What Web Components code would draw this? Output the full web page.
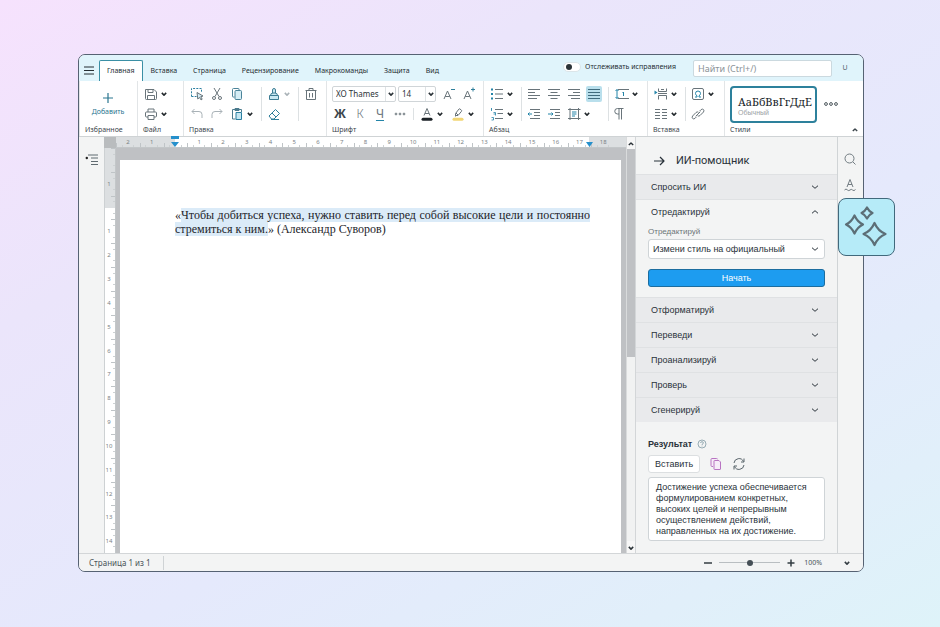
<!DOCTYPE html>
<html lang="ru">
<head>
<meta charset="utf-8">
<title>Текстовый редактор</title>
<style>
html,body{height:100%}
body{margin:0;box-sizing:border-box;padding:54px 76px 55px 78px;font:7px/10px "Noto Sans",sans-serif;color:#2b3338;
background:linear-gradient(150deg,#f6e2fd 0%,#ebe5fb 28%,#e5e9fc 60%,#e1effa 85%,#def3f9 100%)}
</style>
</head>
<body>
<editor-window></editor-window>
<script>
const ICONS={
menu:'<path d="M2 3h10M2 6.500h10M2 10h10" stroke-width="1.200"/>',
caret:'<path d="M4.800 5.900 7 8.100l2.200-2.200" stroke-width="1.500"/>',
caretup:'<path d="M4.800 8.100 7 5.900l2.200 2.200" stroke-width="1.400"/>',
chevron:'<path d="M4 5.700 7 8.300l3-2.600" stroke-width="1"/>',
chevronup:'<path d="M4 8.300 7 5.700l3 2.600" stroke-width="1"/>',
plus:'<path d="M7 2v10M2 7h10" stroke-width="1.200"/>',
save:'<path d="M1.500 2.500h8.500l2.500 2.500v6.500q0 1-1 1h-9q-1 0-1-1zM4 2.500v3h5v-3M3.500 12.500v-4h7v4"/>',
print:'<path d="M4 5V2h6v3M4 10H2.500q-1 0-1-1V6q0-1 1-1h9q1 0 1 1v3q0 1-1 1H10M4 8.500h6v4H4z"/>',
select:'<path d="M1.500 9.500v-8h10v4M1.500 9.500h5" stroke="#2b7fa0" stroke-dasharray="2 1.200"/><path d="M7 5.500l6 3.500-2.300.700 1.500 2.500-1.200.700-1.500-2.500-1.700 1.600z" fill="#d8eef6"/>',
cut:'<path d="M4 1l5 8.500M10 1 5 9.500"/><circle cx="4" cy="11" r="1.500"/><circle cx="10" cy="11" r="1.500"/>',
copy:'<g stroke="#4b8399"><path d="M4.500 10H3q-.500 0-.500-.500V2.500q0-1 1-1h5q.500 0 .500.500v1"/><rect x="5" y="3.500" width="6.500" height="9" rx="1" fill="#d5edf5"/></g>',
undo:'<path d="M4.500 2 2 4.500 4.500 7M2 4.500h7a3 3 0 0 1 3 3V11"/>',
redo:'<path d="M9.500 2 12 4.500 9.500 7M12 4.500H5a3 3 0 0 0-3 3V11"/>',
paste:'<path d="M5.500 12H2.500V2.500h9V5M5 1.500h4v2H5z" stroke="#4b7a8d"/><rect x="6" y="5.500" width="5.500" height="7" fill="#c4e6f2" stroke="#2b7fa0"/>',
brush:'<path d="M5.500 6V3q0-1.500 1.500-1.500T8.500 3v3M3.500 8.500Q3.500 6 6 6h2q2.500 0 2.500 2.500M2.500 8.500h9v4h-9z" stroke="#3d7c93" fill="#c9e8f2"/>',
eraser:'<path d="M2 9 8.500 2.500l4 4L7 12H4.500zM5 6l4 4M4 12.500h8" stroke="#2f7f9b"/>',
trash:'<path d="M1.500 3.500h11M5 3.500v-2h4v2M2.500 3.500v9h9v-9M5.500 6v4.500M8.500 6v4.500"/>',
fontdown:'<path d="M2 12 5.500 4 9 12M3.200 9.500h4.600"/><path d="M9 2.500h4" stroke="#2f7f9b"/>',
fontup:'<path d="M2 12 5.500 4 9 12M3.200 9.500h4.600"/><path d="M9 2.500h4M11 .500v4" stroke="#2f7f9b"/>',
more:'<g stroke="#69747a"><circle cx="3" cy="7" r=".900"/><circle cx="7" cy="7" r=".900"/><circle cx="11" cy="7" r=".900"/></g>',
dots:'<g stroke="#4c565c"><circle cx="2" cy="7" r="1.400"/><circle cx="7" cy="7" r="1.400"/><circle cx="12" cy="7" r="1.400"/></g>',
color:'<path d="M4 8.500 7 1.500l3 7M5 6.500h4"/><path d="M3 12.300h8" stroke="#1c2227" stroke-width="3" stroke-linecap="round"/>',
marker:'<path d="M4.500 9.500V6.500L8 2q.500-.500 1 0l1.500 1.300q.500.500 0 1L7 8.500H4.500M5 6l2 2"/><path d="M3 12.300h8" stroke="#f2d675" stroke-width="3" stroke-linecap="round"/>',
bullets:'<path d="M1 2.500h2M1 7h2M1 11.500h2" stroke="#2384a8" stroke-width="1.800"/><path d="M5 2.500h8M5 7h8M5 11.500h8"/>',
numbers:'<path d="M1.500 1v3M1 2h1M3.500 5.500h2v3M3.500 7h2M1.500 10.500h2v2.500h-2" stroke="#2384a8" stroke-width=".8"/><path d="M5 2.500h8M7.500 6.500h5.500M5 11.500h8"/>',
left:'<path d="M1 2.500h12M1 5.500h7M1 8.500h12M1 11.500h9"/>',
center:'<path d="M1 2.500h12M3.500 5.500h7M1 8.500h12M3.500 11.500h7"/>',
right:'<path d="M1 2.500h12M6 5.500h7M1 8.500h12M4 11.500h9"/>',
justify:'<path d="M1 2.500h12M1 5.500h12M1 8.500h12M1 11.500h12"/>',
outdent:'<path d="M3 2.500h10M7 5.500h6M7 8.500h6M3 11.500h10"/><path d="M5 7H1M2.500 5.500 1 7l1.500 1.500" stroke="#2384a8"/>',
indent:'<path d="M3 2.500h10M8 5.500h5M8 8.500h5M3 11.500h10"/><path d="M1 7h5M4.500 5.500 6 7 4.500 8.500" stroke="#2384a8"/>',
frame:'<path d="M3 1v12M11.500 1v12M1 2.500h12.500M1 11.500h12.500"/><path d="M5 5h4.500M5 7h4.500M5 9h3" stroke="#2384a8"/>',
spacing:'<path d="M2 2.500v9M.500 4 2 2.500 3.500 4M.500 10 2 11.500 3.500 10" stroke="#2384a8"/><path d="M3 2.500h11M3 11.500h11"/><path d="M8.500 5v4M7.500 6l1-1" stroke="#2384a8"/>',
para:'<path d="M7 12.500v-11M9.500 12.500v-11M11.500 1.500h-6a2.700 2.700 0 0 0 0 5.500H7"/>',
pagebreak:'<path d="M.500 3.500l3 2-3 2z" fill="#2384a8" stroke="none"/><path d="M4.500 1.500v3h8v-3M4.500 12.500v-4h8v4M7 2.500h3M4 6.500h9"/>',
columns:'<path d="M1 2.500h5M1 5.500h5M1 8.500h5M1 11.500h5M8 2.500h5M8 5.500h5M8 8.500h5M8 11.500h5"/>',
omega:'<rect x="1.500" y="1.500" width="11" height="11" rx="1.500"/><path d="M4 10h2V8.800Q4.500 8 4.500 6.500a2.500 2.500 0 0 1 5 0Q9.500 8 8 8.800V10h2" stroke="#2384a8"/>',
link:'<path d="M8.500 4.200l1.600-1.600q1.500-1 2.400 0t0 2.400L9 8.500q-1.200 1.200-2.400.200M5.500 9.800 4 11.400q-1.500 1-2.400 0t0-2.400L5 5.500q1.200-1.200 2.400-.200M4.700 9.300l4.600-4.600"/>',
outline:'<path d="M3 2h10M6 5h7M6 8.500h7M6 11.500h7"/><circle cx="1.800" cy="5" r="1.200" fill="#222" stroke="none"/>',
arrow:'<path d="M2 7h10M8 3l4 4-4 4" stroke-width="1.200"/>',
search:'<circle cx="6.500" cy="6.500" r="4.500"/><path d="M10 10l2.500 2.500"/>',
style:'<path d="M4 9 7 1.500 10 9M5 6.500h4M1.500 12q1.500-2 3 0 1.300 1.300 2.500 0 1.300-1.300 2.500 0 1.500 1.500 3-.500"/>',
help:'<circle cx="7" cy="7" r="4" stroke-width=".800"/><path d="M5.600 6q0-1.300 1.400-1.300T8.400 6Q8.400 6.700 7 7.500v.500M7 8.700v.700" stroke-width=".800"/>',
duplicate:'<path d="M4 9.500H3q-1 0-1-1V2.500q0-1 1-1h4.500q1 0 1 .800M5 4q0-.500.500-.500h4.500l1.500 1.500v7q0 .500-.500.500H5.500Q5 12.500 5 12z" stroke="#b874c2" fill="#f6ecf8"/>',
refresh:'<path d="M2 6a5 5 0 0 1 9.500-1.500M12 1.500v3.500H9M12 8a5 5 0 0 1-9.500 1.500M2 12.500V9h3"/>',
minus:'<path d="M3 7h8" stroke-width="1.500"/>',
add:'<path d="M7 3.500v7M3.500 7h7" stroke-width="1.500"/>'
};
class Base extends HTMLElement{
  connectedCallback(){
    if(this.shadowRoot)return;
    this.attachShadow({mode:'open'}).innerHTML='<style>*{box-sizing:border-box}:host{box-sizing:border-box}button,input,select,textarea{font:inherit;color:inherit;margin:0}button{cursor:pointer}'+this.css()+'</style>'+this.html();
  }
  css(){return ''}
  html(){return '<slot></slot>'}
  at(n,d=''){return this.getAttribute(n)??d}
}
const def=(name,css,html)=>customElements.define(name,class extends Base{
  css(){return css} html(){return typeof html==='function'?html(this):(html??'<slot></slot>')}});

def('ui-icon',':host{display:block;width:14px;height:14px;flex:none}svg{display:block;overflow:visible}',
 e=>`<svg width="14" height="14" viewBox="0 0 14 14" fill="none" stroke="currentColor" stroke-linejoin="round" aria-hidden="true">${ICONS[e.at('name')]}</svg>`);

def('tool-button',`:host{display:flex;align-items:center;color:#69747a}
button{display:grid;place-items:center;height:18px;width:var(--tool-width,20px);padding:0;border:0;background:none;font-size:12px;line-height:16px}
.caret{width:6px;color:#22282c}.caret ui-icon{margin:0 -4px}
:host([pressed]) button{width:16px;height:16px;margin:0 2px;background:#b9dfec;border-radius:2px;color:#3f6b7d}
:host([muted]){color:#a9b2b7}:host([softcaret]) .caret{color:#a9b2b7}`,
 e=>`<button aria-label="${e.at('label')}">${e.at('icon')?`<ui-icon name="${e.at('icon')}"></ui-icon>`:'<slot></slot>'}</button>`+(e.hasAttribute('menu')?`<button class="caret" aria-label="${e.at('label')}: варианты"><ui-icon name="caret"></ui-icon></button>`:''));

def('ribbon-group',`:host{display:flex;flex-direction:column;padding:3px var(--end,4px) 0 3px;border-left:1px solid #e2e5e7}
:host(:first-child){border-left-color:transparent}
.tools{display:flex;height:40px}.foot{display:flex;justify-content:space-between;align-items:center;height:12px;padding-left:2px}`,
 e=>`<div class="tools"><slot></slot></div><div class="foot"><span>${e.at('label')}</span><slot name="corner"></slot></div>`);
def('tool-cluster',`:host{display:grid;grid-template-rows:20px 20px;justify-items:start}
:host([split]){margin-left:8px;padding-left:3px;background:linear-gradient(#dde1e3,#dde1e3) 0 3px/1px 34px no-repeat}`);
def('tool-row',`:host{display:flex;align-items:center;height:20px}`);
def('tool-divider',`:host{display:block;width:1px;height:12px;background:#dde1e3;margin:0 3px}`);

def('combo-box',`:host{display:grid;grid-template-columns:1fr 10px;height:16px;border:1px solid #d0d5d8;border-radius:2px;background:#fff;font-size:8px;color:#2b3338}
select{grid-area:1/1/2/3;width:100%;appearance:none;border:0;background:none;padding:0 0 0 3px;height:14px;line-height:14px}
span{grid-area:1/2;display:grid;place-items:center;border-left:1px solid #dfe3e5;pointer-events:none}ui-icon{margin:0 -3px}`,
 e=>`<select aria-label="${e.at('label')}"><option>${e.at('value')}</option></select><span><ui-icon name="caret"></ui-icon></span>`);

def('menu-tabs',`:host{display:flex;align-items:stretch;height:26px;padding-top:5px;background:#e0f4fb;color:#252d32}
.menu{width:20px;border:0;background:none;padding:0;display:grid;place-items:center}
nav{display:flex}
a{padding:0 7px;border:1px solid transparent;border-bottom:0;line-height:19px;color:inherit;text-decoration:none;border-radius:2px 2px 0 0}
a[aria-current]{background:#fff;border-color:#3a8fa5}
.space{flex:1}
label{display:flex;align-items:center;gap:4px;height:14px}
.switch{appearance:none;width:18px;height:10px;border-radius:5px;background:#fff;border:1px solid #dbe5e9;padding:1px}
.switch::before{content:"";display:block;width:6px;height:6px;margin-left:1px;border-radius:3px;background:#2b3338}
.find{width:139px;height:17px;margin-left:17px;border:1px solid #cbd9df;border-radius:2px;background:#fff;padding:0 4px;font-size:9px}
.find::placeholder{color:#8b9398}
.user{border:0;background:none;width:10px;height:16px;padding:0;margin:0 13px 0 8px;color:#55626a}`,
`<button class="menu" aria-label="Меню"><ui-icon name="menu"></ui-icon></button>
<nav><a href="#" aria-current="page">Главная</a><a href="#">Вставка</a><a href="#">Страница</a><a href="#">Рецензирование</a><a href="#">Макрокоманды</a><a href="#">Защита</a><a href="#">Вид</a></nav>
<span class="space"></span>
<label><input class="switch" type="checkbox" role="switch">Отслеживать исправления</label>
<input class="find" type="text" placeholder="Найти (Ctrl+/)" aria-label="Найти"><button class="user">U</button>`);

def('add-favorite',`:host{display:flex;flex:1}button{flex:1;border:0;background:none;padding:7px 0 0;display:flex;flex-direction:column;align-items:center;gap:2px;color:#2a7690}`,
 `<button><ui-icon name="plus"></ui-icon><span>Добавить</span></button>`);
def('style-card',`:host{display:block;margin:2px 7px 0 2px}
button{display:block;width:87px;height:37px;border:2px solid #2d819c;border-radius:4px;background:#fff;padding:3px 1px 0 6px;text-align:left}
b{display:block;font:11px/14px "Noto Serif",serif;white-space:nowrap;color:#20262a}
span{display:block;font:7px/8px "Liberation Sans",sans-serif;color:#9aa1a5}`,
 `<button><b>АаБбВвГгДдЕ</b><span>Обычный</span></button>`);

def('ribbon-bar',`:host{display:flex;height:56px;background:#fff;border-bottom:1px solid #cfd3d5;color:#3c464c}
.fav{width:58px}.file{--end:16px}.edit{--end:5px}.par{--end:9px}.ins{--end:10px}.styles{flex:1;--end:1px}.narrow{--tool-width:11px}.push{margin-left:2px}.wide{width:64px}.size{width:38px;margin:0 3px 0 2px}.line{margin-left:4px;padding-left:4px}.gap{margin-left:5px}.all{--tool-width:14px}
b{font-size:12px;color:#3c464c}u{text-decoration-color:#2384a8;text-underline-offset:2px}i{font-style:normal;font-weight:300}`,
`<ribbon-group class="fav" label="Избранное"><add-favorite></add-favorite></ribbon-group>
<ribbon-group class="file" label="Файл"><tool-cluster><tool-row><tool-button icon="save" label="Сохранить" menu></tool-button></tool-row><tool-row><tool-button icon="print" label="Печать" menu></tool-button></tool-row></tool-cluster></ribbon-group>
<ribbon-group class="edit" label="Правка">
<tool-cluster><tool-row><tool-button icon="select" label="Выделить"></tool-button><tool-button icon="cut" label="Вырезать"></tool-button><tool-button icon="copy" label="Копировать"></tool-button></tool-row>
<tool-row><tool-button muted icon="undo" label="Отменить"></tool-button><tool-button muted icon="redo" label="Повторить"></tool-button><tool-button icon="paste" label="Вставить" menu></tool-button></tool-row></tool-cluster>
<tool-cluster split><tool-row><tool-button softcaret icon="brush" label="Формат по образцу" menu></tool-button></tool-row><tool-row><tool-button icon="eraser" label="Очистить формат"></tool-button></tool-row></tool-cluster>
<tool-cluster split><tool-row><tool-button icon="trash" label="Удалить"></tool-button></tool-row></tool-cluster></ribbon-group>
<ribbon-group label="Шрифт"><tool-cluster>
<tool-row><combo-box class="wide push" label="Шрифт" value="XO Thames"></combo-box><combo-box class="size" label="Размер" value="14"></combo-box><tool-button icon="fontdown" label="Уменьшить"></tool-button><tool-button icon="fontup" label="Увеличить"></tool-button></tool-row>
<tool-row><tool-button label="Полужирный"><b>Ж</b></tool-button><tool-button label="Курсив"><i>К</i></tool-button><tool-button label="Подчёркнутый"><u>Ч</u></tool-button><tool-button icon="more" label="Ещё"></tool-button><tool-divider></tool-divider><tool-button icon="color" label="Цвет текста" menu></tool-button><tool-button class="gap" icon="marker" label="Цвет выделения" menu></tool-button></tool-row></tool-cluster></ribbon-group>
<ribbon-group class="par" label="Абзац">
<tool-cluster><tool-row><tool-button icon="bullets" label="Маркеры" menu></tool-button></tool-row><tool-row><tool-button icon="numbers" label="Нумерация" menu></tool-button></tool-row></tool-cluster>
<tool-cluster split><tool-row><tool-button icon="left" label="По левому краю"></tool-button><tool-button icon="center" label="По центру"></tool-button><tool-button icon="right" label="По правому краю"></tool-button><tool-button pressed icon="justify" label="По ширине"></tool-button></tool-row>
<tool-row><tool-button icon="outdent" label="Уменьшить отступ"></tool-button><tool-button icon="indent" label="Увеличить отступ"></tool-button><tool-button icon="frame" label="Границы" menu></tool-button></tool-row></tool-cluster>
<tool-cluster split class="line"><tool-row><tool-button icon="spacing" label="Интервал" menu></tool-button></tool-row><tool-row><tool-button class="narrow" icon="para" label="Непечатаемые символы"></tool-button></tool-row></tool-cluster></ribbon-group>
<ribbon-group class="ins" label="Вставка">
<tool-cluster><tool-row><tool-button icon="pagebreak" label="Разрыв" menu></tool-button></tool-row><tool-row><tool-button icon="columns" label="Колонки" menu></tool-button></tool-row></tool-cluster>
<tool-cluster split><tool-row><tool-button icon="omega" label="Символ" menu></tool-button></tool-row><tool-row><tool-button icon="link" label="Ссылка"></tool-button></tool-row></tool-cluster></ribbon-group>
<ribbon-group class="styles" label="Стили"><style-card></style-card><tool-button class="all" icon="dots" label="Все стили"></tool-button><ui-icon slot="corner" name="caretup"></ui-icon></ribbon-group>`);

const cells=a=>a.map(n=>`<span>${n}</span>`).join('');
def('ruler-horizontal',`:host{display:flex;position:relative;height:11px;padding-right:11px;border-bottom:1px solid #c3c7c9;font-size:6px;line-height:10px;color:#7b8286;background:linear-gradient(to right,#dcdfe1 11.6%,#fff 11.6%,#fff 92.8%,#dcdfe1 92.8%)}
span{flex:1;text-align:center;background:linear-gradient(#bfc4c7,#bfc4c7) 0 100%/1px 4px no-repeat,linear-gradient(#cdd1d3,#cdd1d3) 25% 100%/1px 2px no-repeat,linear-gradient(#cdd1d3,#cdd1d3) 75% 100%/1px 2px no-repeat}
svg{position:absolute;bottom:0;width:8px;height:11px;fill:#2590cc;transform:translateX(-50%)}.l{left:11.6%}.r{left:92.8%}`,
 cells([2,1,'',...Array.from({length:18},(_,i)=>i+1)])+'<svg class="l" viewBox="0 0 8 11"><path d="M0 0h8v3H0zM0 6h8L4 11z"/></svg><svg class="r" viewBox="0 0 8 11"><path d="M1 6h7L4.500 11z"/></svg>');
def('ruler-vertical',`:host{display:flex;flex-direction:column;font-size:6px;color:#7b8286;background:linear-gradient(#dcdfe1 14.8%,#fff 14.8%);border-left:1px solid #cdd1d3;border-right:1px solid #c3c7c9}
span{flex:1;display:grid;align-items:center;justify-items:center;padding-right:2px;background:linear-gradient(#bfc4c7,#bfc4c7) 100% 0/4px 1px no-repeat,linear-gradient(#cdd1d3,#cdd1d3) 100% 25%/2px 1px no-repeat,linear-gradient(#cdd1d3,#cdd1d3) 100% 75%/2px 1px no-repeat}`,
 cells(['',1,'',...Array.from({length:14},(_,i)=>i+1)]));

def('document-page',`:host{display:block;background:#fff;padding:48px 31px 0 55px;font:12px/14px "Liberation Serif",serif;color:#1d2429}`);
def('scroll-track',`:host{display:flex;flex-direction:column;background:#f1f2f2;border-left:1px solid #d9dbdc;border-right:1px solid #d3d6d8}
button{border:0;padding:0;background:#f7f7f7;height:12px;display:grid;place-items:center}.rail{flex:1}.thumb{height:53%;background:#bfc1c4}ui-icon{margin:0 -3px}`,
 `<button aria-label="Вверх"><ui-icon name="caretup"></ui-icon></button><div class="rail"><div class="thumb"></div></div><button aria-label="Вниз"><ui-icon name="caret"></ui-icon></button>`);

def('accordion-item',`:host{display:block}
button{display:flex;justify-content:space-between;align-items:center;width:100%;height:25px;border:0;border-top:1px solid #dfe1e3;background:#e9eaec;padding:0 15px;text-align:left}
:host([open]) button{background:none}
.body{display:none}:host([open]) .body{display:block;padding:2px 12px 10px}`,
 e=>`<button aria-expanded="${e.hasAttribute('open')}"><span>${e.at('label')}</span><ui-icon name="${e.hasAttribute('open')?'chevronup':'chevron'}"></ui-icon></button><div class="body"><slot></slot></div>`);

def('assistant-panel',`:host{display:flex;flex-direction:column;background:#f3f4f4;border-right:1px solid #d0d4d6;font:9px/11px "Liberation Sans",sans-serif;color:#29323a}
header{display:flex;align-items:center;gap:10px;height:37px;padding:10px 16px 0}
header button{border:0;background:none;padding:0}
h2{margin:0;font:11px/14px Roboto,sans-serif}
.field{display:block;color:#6d7479;font-size:8px;line-height:11px}
.select{display:grid;margin-top:2px;height:20px;border:1px solid #cfd4d7;border-radius:3px;background:#fff}
select{grid-area:1/1;appearance:none;border:0;background:none;padding:0 4px;width:100%}
.select ui-icon{grid-area:1/1;justify-self:end;align-self:center;margin-right:2px;pointer-events:none}
.go{display:block;width:100%;height:18px;margin:10px 0 0;border:1px solid #1c6d9f;border-radius:3px;background:#1d9cf0;color:#fff;padding:0}
.result{padding:15px 12px 0}
h3{margin:0;font-size:9px;line-height:12px;display:flex;align-items:center;gap:3px}h3 ui-icon{color:#7f99a3}
.acts{display:flex;align-items:center;gap:9px;margin:4px 0 4px;color:#59646b}
.acts button{border:0;background:none;padding:0}.acts .ins{height:18px;padding:0 6px;border:1px solid #dcdfe1;background:#fff;border-radius:3px;color:#29323a}
textarea{display:block;width:100%;height:64px;resize:none;border:1px solid #cfd4d7;border-radius:3px;background:#fff;padding:4px 7px;overflow:hidden}`,
`<header><button aria-label="Свернуть"><ui-icon name="arrow"></ui-icon></button><h2>ИИ-помощник</h2></header>
<accordion-item label="Спросить ИИ"></accordion-item>
<accordion-item label="Отредактируй" open><label class="field" for="act">Отредактируй</label><div class="select"><select id="act"><option>Измени стиль на официальный</option></select><ui-icon name="chevron"></ui-icon></div><button class="go">Начать</button></accordion-item>
<accordion-item label="Отформатируй"></accordion-item><accordion-item label="Переведи"></accordion-item><accordion-item label="Проанализируй"></accordion-item><accordion-item label="Проверь"></accordion-item><accordion-item label="Сгенерируй"></accordion-item>
<div class="result"><h3>Результат<ui-icon name="help"></ui-icon></h3><div class="acts"><button class="ins">Вставить</button><button aria-label="Копировать"><ui-icon name="duplicate"></ui-icon></button><button aria-label="Повторить"><ui-icon name="refresh"></ui-icon></button></div>
<textarea aria-label="Результат">Достижение успеха обеспечивается
формулированием конкретных,
высоких целей и непрерывным
осуществлением действий,
направленных на их достижение.</textarea></div>`);

def('tool-rail',`:host{display:flex;flex-direction:column;align-items:center;gap:12px;padding:15px 1px 0 0;background:#f3f4f4;position:relative;color:#727c82}
button{border:0;background:none;padding:0}
.ai{position:absolute;top:61px;left:0;width:57px;height:58px;background:#b6ebf8;border:1px solid #41697c;border-radius:8px;display:grid;place-items:center}`,
`<button aria-label="Поиск"><ui-icon name="search"></ui-icon></button><button aria-label="Стили"><ui-icon name="style"></ui-icon></button>
<button class="ai" aria-label="ИИ-помощник"><svg width="55" height="56" viewBox="0 0 55 56" fill="none" stroke="#5c6e76" stroke-width="2.200" stroke-linejoin="round"><path d="M28 8.500q2 4 5.500 5.500-3.500 1.500-5.500 5.500-2-4-5.500-5.500 3.500-1.500 5.500-5.500zM15.500 16.500q3 6.500 8.500 9-5.500 2.500-8.500 9-3-6.500-8.500-9 5.500-2.500 8.500-9zM35.500 24q3.500 8 11 11-7.500 3-11 11-3.500-8-11-11 7.500-3 11-11z"/></svg></button>`);

def('status-bar',`:host{display:flex;align-items:center;height:18px;border-top:1px solid #d3d6d8;background:#f3f4f4;color:#4a545a}
.pages{font-size:8px;line-height:14px;padding:0 12px 0 10px;border-right:1px solid #cfd3d5}
.space{flex:1}button{border:0;background:none;padding:0;color:#333c42}
input{appearance:none;width:61px;height:10px;margin:0 4px;background:linear-gradient(#b9bec1,#b9bec1) 0 50%/100% 1px no-repeat}
input::-webkit-slider-thumb{appearance:none;width:6px;height:6px;border-radius:3px;background:#454f56}
.pct{margin:0 18px 0 6px}.last{margin-right:9px}`,
`<span class="pages">Страница 1 из 1</span><span class="space"></span><button aria-label="Уменьшить"><ui-icon name="minus"></ui-icon></button><input type="range" min="0" max="200" value="100" aria-label="Масштаб"><button aria-label="Увеличить"><ui-icon name="add"></ui-icon></button><span class="pct">100%</span><button class="last" aria-label="Выбрать масштаб"><ui-icon name="caret"></ui-icon></button>`);

def('editor-window',`:host{display:flex;flex-direction:column;height:100%;border:1px solid #566273;border-radius:7px;background:#f3f4f4}
menu-tabs{border-radius:6px 6px 0 0}status-bar{border-radius:0 0 6px 6px}
main{flex:1;min-height:0;display:grid;grid-template-columns:25px 12px minmax(0,1fr) 10px 202px 25px;grid-template-rows:11px minmax(0,1fr)}
aside,scroll-track,assistant-panel,tool-rail{grid-row:1/3}
aside{padding:16px 0 0 6px;color:#5f6a70}aside button{border:0;background:none;padding:0}
.corner{background:#b9bcbe}
.desk{background:#bfc1c4;padding:12px 5px 0 4px;display:grid}
ruler-horizontal{grid-area:1/3}ruler-vertical{grid-area:2/2}.desk{grid-area:2/3}.corner{grid-area:1/2}
scroll-track{grid-column:4}assistant-panel{grid-column:5}tool-rail{grid-column:6}
p{margin:0;text-align:justify}mark{background:#dbebf8;color:inherit}`,
`<menu-tabs></menu-tabs><ribbon-bar></ribbon-bar>
<main><aside><button aria-label="Структура"><ui-icon name="outline"></ui-icon></button></aside><div class="corner"></div><ruler-horizontal></ruler-horizontal><ruler-vertical></ruler-vertical>
<div class="desk"><document-page><p>«<mark>Чтобы добиться успеха, нужно ставить перед собой высокие цели и постоянно </mark><mark>стремиться к ним.</mark>» (Александр Суворов)</p></document-page></div>
<scroll-track></scroll-track><assistant-panel></assistant-panel><tool-rail></tool-rail></main>
<status-bar></status-bar>`);
</script>
</body>
</html>
